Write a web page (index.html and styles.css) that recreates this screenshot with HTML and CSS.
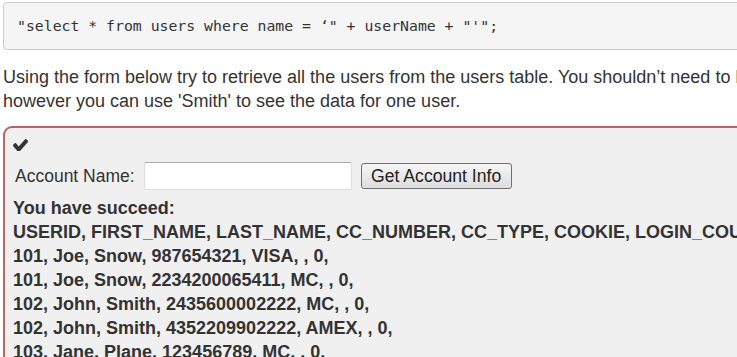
FILE: index.html
```html
<!DOCTYPE html>
<html lang="en">
<head>
    <meta charset="UTF-8">
    <title>SQL Injection</title>
    <link rel="stylesheet" href="styles.css">
</head>
<body>
    <div class="page">
        <pre class="code">"select * from users where name = ‘" + userName + "'";</pre>

        <p class="intro">Using the form below try to retrieve all the users from the users table. You shouldn’t need to know any specific user name to get the complete list,<br>however you can use 'Smith' to see the data for one user.</p>

        <div class="attack">
            <div class="status">
                <svg class="check" viewBox="121 338 1550 1088" width="15" height="12" preserveAspectRatio="none">
                    <path d="M1671 566q0 40-28 68l-724 724-136 136q-28 28-68 28t-68-28l-136-136-362-362q-28-28-28-68t28-68l136-136q28-28 68-28t68 28l294 295 656-657q28-28 68-28t68 28l136 136q28 28 28 68z"/>
                </svg>
            </div>

            <form class="account-form" onsubmit="return false">
                <label for="account">Account Name:</label>
                <input type="text" id="account" name="account">
                <button type="submit">Get Account Info</button>
            </form>

            <div class="result">
                <p>You have succeed:</p>
                <p>USERID, FIRST_NAME, LAST_NAME, CC_NUMBER, CC_TYPE, COOKIE, LOGIN_COUNT,</p>
                <p>101, Joe, Snow, 987654321, VISA, , 0,</p>
                <p>101, Joe, Snow, 2234200065411, MC, , 0,</p>
                <p>102, John, Smith, 2435600002222, MC, , 0,</p>
                <p>102, John, Smith, 4352209902222, AMEX, , 0,</p>
                <p>103, Jane, Plane, 123456789, MC, , 0,</p>
                <p>103, Jane, Plane, 333498703333, AMEX, , 0,</p>
            </div>
        </div>
    </div>
</body>
</html>
```

FILE: styles.css
```css
html, body {
    margin: 0;
    padding: 0;
    overflow: hidden;
}

body {
    background-color: #ffffff;
    color: #333;
    font-family: 'Liberation Sans', Arial, sans-serif;
    font-size: 18px;
    line-height: 24px;
}

.page {
    width: 1200px;
    padding: 2px 0 0 3px;
}

/* Bloco de código */
.code {
    margin: 0;
    padding: 13px 13px;
    background-color: #f5f5f5;
    border: 1px solid #cccccc;
    border-radius: 4px;
    font-family: 'DejaVu Sans Mono', 'Liberation Mono', monospace;
    font-size: 14.8px;
    line-height: 20px;
    color: #333;
}

.intro {
    margin: 15px 0 13px 0;
}

/* Caixa do ataque */
.attack {
    background-color: #f0f0f0;
    border: 2px solid #b06868;
    border-radius: 9px;
    padding: 8px 8px 20px 8px;
}

.status {
    height: 18px;
    display: flex;
    align-items: flex-end;
}

.check {
    display: block;
    fill: #333;
    margin-bottom: 3px;
}

.account-form {
    display: flex;
    align-items: center;
    height: 28px;
    margin-top: 8px;
    font-size: 17.5px;
}

.account-form label {
    margin-left: 2px;
    margin-right: 9px;
}

.account-form input {
    width: 208px;
    height: 28px;
    box-sizing: border-box;
    border: 1px solid #dcdcdc;
    border-top-color: #a9a9a9;
    background-color: #fff;
    border-radius: 2px;
    margin: 0 9px 0 0;
    padding: 2px 4px;
}

.account-form button {
    height: 26px;
    width: 151px;
    box-sizing: border-box;
    padding: 0;
    font-family: 'Liberation Sans', Arial, sans-serif;
    font-size: 17.6px;
    color: #222;
    border: 1px solid #707070;
    border-radius: 3px;
    background: linear-gradient(#f6f6f6, #dddddd);
}

.result {
    margin-top: 6px;
    font-weight: bold;
    white-space: nowrap;
}

.result p {
    margin: 0;
}
```
